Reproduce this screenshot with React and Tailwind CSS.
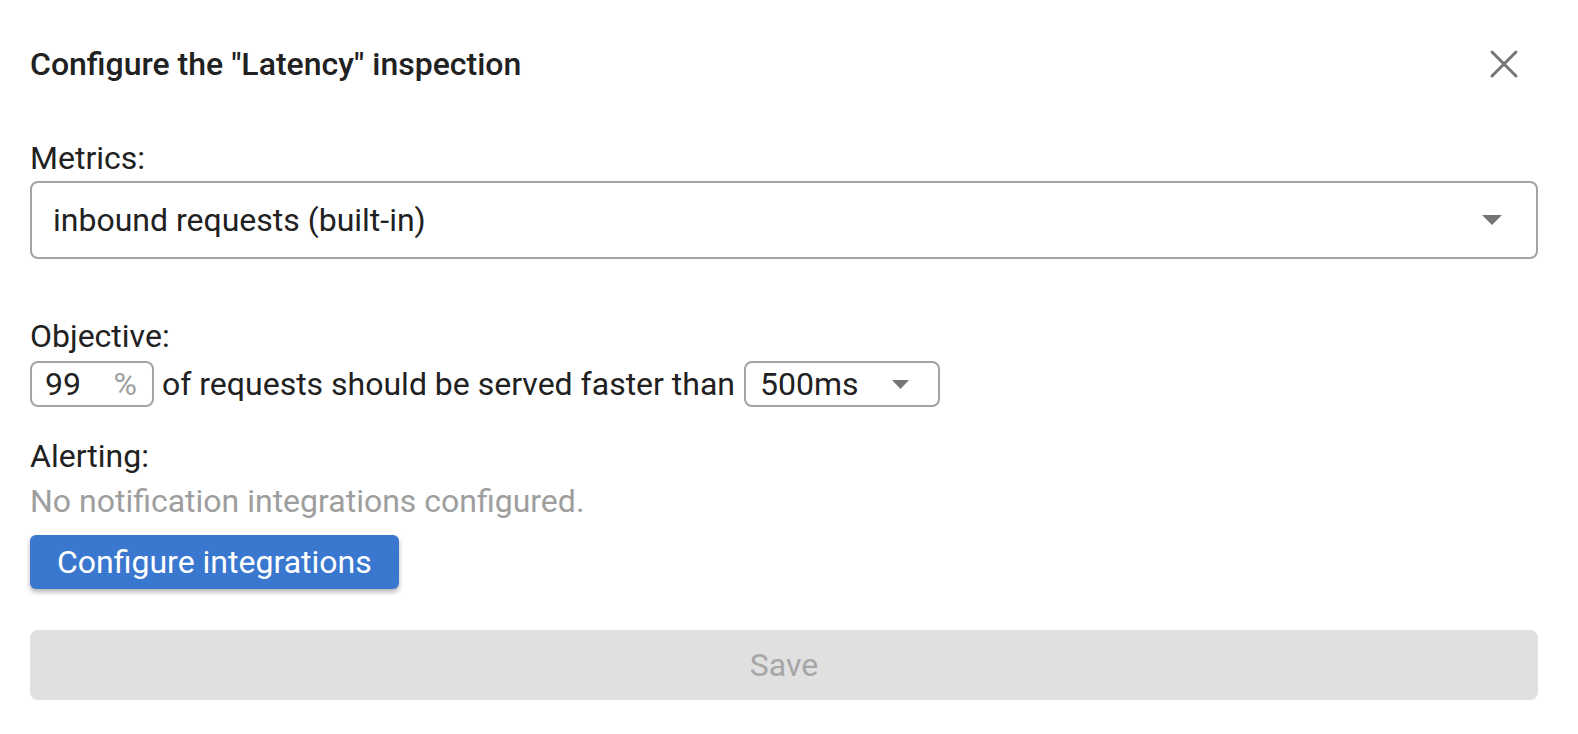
import React from "react";

export default function App() {
  return (
    <div className="w-[1578px] h-[734px] bg-white text-[#212121] font-['Roboto',sans-serif] pl-[30px] pr-[40px] pt-[45px]">
      <div className="flex items-center justify-between h-[38px]">
        <div className="text-[32px] leading-[38px] font-medium">Configure the "Latency" inspection</div>
        <svg width="30" height="30" viewBox="0 0 30 30" className="mr-[19px]">
          <path d="M3 3 L27 27 M27 3 L3 27" stroke="#757575" strokeWidth="3" strokeLinecap="round" />
        </svg>
      </div>

      <div className="mt-[56px] text-[32px] leading-[38px]">Metrics:</div>
      <div className="mt-[4px] h-[78px] border-2 border-[#a3a3a3] rounded-[8px] flex items-center justify-between pl-[21px] pr-[34px]">
        <span className="text-[32px] leading-[38px]">inbound requests (built-in)</span>
        <svg width="20" height="10" viewBox="0 0 20 10">
          <path d="M0 0 L20 0 L10 10 Z" fill="#757575" />
        </svg>
      </div>

      <div className="mt-[58px] text-[32px] leading-[38px]">Objective:</div>
      <div className="mt-[6px] flex items-center h-[46px] text-[32px] leading-[38px]">
        <div className="w-[124px] h-[46px] border-2 border-[#a3a3a3] rounded-[8px] flex items-center justify-between pl-[13px] pr-[15px]">
          <span>99</span>
          <span className="text-[#9e9e9e]">%</span>
        </div>
        <span className="ml-[8px] mr-[9px]">of requests should be served faster than</span>
        <div className="w-[196px] h-[46px] border-2 border-[#a3a3a3] rounded-[8px] flex items-center justify-between pl-[14px] pr-[29px]">
          <span>500ms</span>
          <svg width="17" height="9" viewBox="0 0 17 9">
            <path d="M0 0 L17 0 L8.5 9 Z" fill="#757575" />
          </svg>
        </div>
      </div>

      <div className="mt-[27px] text-[32px] leading-[45px]">Alerting:</div>
      <div className="text-[32px] leading-[45px] text-[#9e9e9e]">No notification integrations configured.</div>
      <button className="mt-[11px] h-[54px] px-[27px] bg-[#3a77cf] text-white text-[32px] leading-[38px] rounded-[6px] shadow-[0_3px_5px_rgba(0,0,0,0.3)]">
        Configure integrations
      </button>

      <div className="mt-[41px] h-[70px] bg-[#e0e0e0] rounded-[8px] flex items-center justify-center text-[32px] text-[#a6a6a6]">
        Save
      </div>
    </div>
  );
}
